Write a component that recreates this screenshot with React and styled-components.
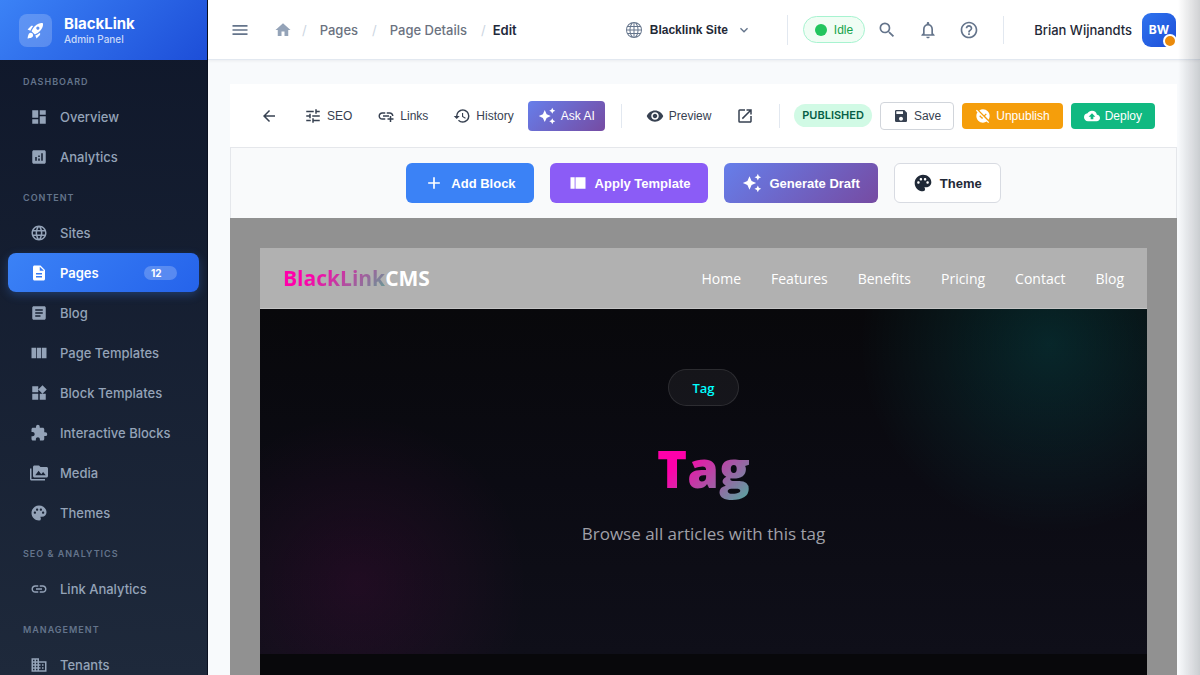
import React from 'react';
import styled, { createGlobalStyle, css } from 'styled-components';
import {
  MdRocketLaunch, MdDashboard, MdAnalytics, MdLanguage, MdDescription, MdArticle,
  MdWidgets, MdExtension, MdPermMedia, MdPalette, MdLink, MdBusiness,
  MdMenu, MdHome, MdExpandMore, MdSearch, MdNotificationsNone, MdHelpOutline,
  MdArrowBack, MdTune, MdAddLink, MdHistory, MdAutoAwesome, MdVisibility,
  MdOpenInNew, MdSave, MdUnpublished, MdBackup, MdAdd,
} from 'react-icons/md';
import { BsGlobe } from 'react-icons/bs';

const ui = `Inter, "Liberation Sans", sans-serif`;
const arial = `"Liberation Sans", Arial, sans-serif`;
const site = `"Open Sans", "Noto Sans", sans-serif`;

const GlobalStyle = createGlobalStyle`
  *, *::before, *::after { box-sizing: border-box; }
  body { margin: 0; font-family: ${ui}; background: #f8fafc; }
  button { font: inherit; color: inherit; background: none; border: 0; padding: 0; cursor: pointer; white-space: nowrap; }
  a { color: inherit; text-decoration: none; }
  h1, p, ul { margin: 0; padding: 0; }
  ul { list-style: none; }
  svg { display: block; flex-shrink: 0; }
`;

const Shell = styled.div`
  display: grid;
  grid-template-columns: 208px minmax(0, 1fr);
  height: 100vh;
  overflow: hidden;
`;

const Sidebar = styled.aside`
  background: linear-gradient(180deg, #0f172a 0%, #1e293b 100%);
  border-right: 1px solid #0a1020;
  overflow: hidden;
`;

const Brand = styled.div`
  display: flex;
  align-items: center;
  gap: 12px;
  height: 60px;
  padding: 0 19px;
  color: #fff;
  background: linear-gradient(135deg, #3b82f6 0%, #1d4ed8 100%);
`;

const BrandMark = styled.span`
  display: grid;
  place-items: center;
  width: 33px;
  height: 33px;
  border-radius: 8px;
  background: rgba(255, 255, 255, 0.2);
`;

const BrandName = styled.div`
  font-size: 15px;
  font-weight: 700;
  line-height: 17px;
`;

const BrandSub = styled.div`
  font-size: 10px;
  font-weight: 500;
  line-height: 14px;
  color: rgba(255, 255, 255, 0.75);
`;

const Section = styled.section`
  padding: 14px 8px 0;
`;

const SectionTitle = styled.div`
  padding: 0 15px;
  margin-bottom: 7px;
  font-size: 9px;
  font-weight: 600;
  line-height: 16px;
  letter-spacing: 1px;
  text-transform: uppercase;
  color: #64748b;
`;

const NavList = styled.ul`
  display: flex;
  flex-direction: column;
  gap: 1px;
`;

const NavItem = styled.a`
  display: flex;
  align-items: center;
  gap: 12px;
  height: 39px;
  padding: 0 22px;
  border-radius: 8px;
  font-size: 13px;
  font-weight: 500;
  color: #94a3b8;
  ${(p) => p.$active && css`
    color: #fff;
    font-weight: 600;
    background: linear-gradient(135deg, #3b82f6 0%, #2563eb 100%);
    box-shadow: 0 3px 10px rgba(59, 130, 246, 0.3);
  `}
`;

const Count = styled.span`
  width: 33px;
  height: 14px;
  margin-left: auto;
  padding-left: 7px;
  border-radius: 7px;
  background: rgba(255, 255, 255, 0.22);
  font-size: 10px;
  font-weight: 700;
  line-height: 14px;
`;

const Main = styled.div`
  display: flex;
  flex-direction: column;
  min-width: 0;
  min-height: 0;
`;

const TopBar = styled.header`
  display: flex;
  flex-shrink: 0;
  align-items: center;
  height: 60px;
  padding: 0 24px 0 22px;
  background: #fff;
  border-bottom: 1px solid #e2e8f0;
  box-shadow: 0 1px 3px rgba(15, 23, 42, 0.06);
  color: #64748b;
`;

const Crumbs = styled.nav`
  display: flex;
  align-items: center;
  margin-left: 24px;
  font-size: 13px;
  font-weight: 500;
  color: #6b7280;
`;

const HomeLink = styled.a`
  color: #94a3b8;
`;

const Slash = styled.span`
  margin: 0 ${(p) => (p.$last ? 7 : 13)}px 0 ${(p) => (p.$first ? 10 : 14)}px;
  font-weight: 400;
  color: #cbd5e1;
`;

const Current = styled.span`
  font-weight: 600;
  color: #1e293b;
`;

const SiteSwitch = styled.button`
  display: flex;
  align-items: center;
  gap: 8px;
  margin-left: auto;
  color: #64748b;
`;

const SiteName = styled.span`
  font-family: ${arial};
  font-size: 12px;
  font-weight: 700;
  color: #1f2937;
`;

const Divider = styled.span`
  width: 1px;
  height: ${(p) => p.$height}px;
  margin: 0 ${(p) => p.$right}px 0 ${(p) => p.$left}px;
  background: #e2e8f0;
`;

const Status = styled.span`
  display: flex;
  align-items: center;
  gap: 7px;
  height: 27px;
  padding: 0 11px;
  border: 1px solid #a7f3d0;
  border-radius: 14px;
  background: #f0fdf4;
  font-family: ${arial};
  font-size: 12px;
  color: #16a34a;
  &::before {
    content: '';
    width: 12px;
    height: 12px;
    border-radius: 50%;
    background: #22c55e;
  }
`;

const TopActions = styled.div`
  display: flex;
  gap: 21px;
  margin-left: 12px;
`;

const UserName = styled.span`
  font-size: 13px;
  font-weight: 500;
  color: #1f2937;
`;

const Avatar = styled.button`
  position: relative;
  width: 34px;
  height: 34px;
  margin-left: 10px;
  border-radius: 9px;
  background: linear-gradient(135deg, #2f74ee, #1d4ed8);
  font-size: 12px;
  font-weight: 700;
  color: #fff;
`;

const Presence = styled.span`
  position: absolute;
  right: -1px;
  bottom: -1px;
  width: 14px;
  height: 14px;
  border: 2px solid #fff;
  border-radius: 50%;
  background: #ea8a0b;
`;

const Content = styled.main`
  display: flex;
  flex: 1;
  flex-direction: column;
  min-height: 0;
  padding: 24px 23px 0 22px;
`;

const EditorBar = styled.div`
  display: flex;
  flex-shrink: 0;
  align-items: center;
  height: 63px;
  padding: 0 22px 0 30px;
  background: #fff;
  font-family: ${arial};
  font-size: 12px;
  color: #374151;
`;

const ToolGroup = styled.div`
  display: flex;
  align-items: center;
  gap: 25px;
`;

const BackButton = styled.button`
  margin-right: 26px;
`;

const ToolButton = styled.button`
  display: flex;
  align-items: center;
  gap: 5px;
`;

const AskButton = styled.button`
  display: flex;
  align-items: center;
  gap: 5px;
  height: 30px;
  margin-left: 14px;
  padding: 0 10px;
  border-radius: 4px;
  background: linear-gradient(135deg, #667eea 0%, #764ba2 100%);
  color: #fff;
`;

const Published = styled.span`
  height: 23px;
  padding: 0 8px;
  border-radius: 12px;
  background: #d1fae5;
  font-size: 11px;
  font-family: ${ui};
  font-weight: 600;
  line-height: 23px;
  color: #065f46;
`;

const SaveGroup = styled.div`
  display: flex;
  align-items: center;
  gap: 8px;
  margin-left: auto;
`;

const BarButton = styled.button`
  display: flex;
  align-items: center;
  gap: 5px;
  height: ${(p) => (p.$tone ? 26 : 28)}px;
  padding: 0 ${(p) => (p.$tone ? 13 : 12)}px;
  border: ${(p) => (p.$tone ? '0' : '1px solid #d1d5db')};
  border-radius: 4px;
  background: ${(p) => p.$tone || '#fff'};
  color: ${(p) => (p.$tone ? '#fff' : '#374151')};
`;

const BlockBar = styled.div`
  display: flex;
  flex-shrink: 0;
  justify-content: center;
  gap: 16px;
  padding: 15px 0;
  border: 1px solid #e5e7eb;
  border-bottom: 0;
  background: #f9fafb;
`;

const BlockButton = styled.button`
  display: flex;
  align-items: center;
  gap: 7px;
  height: 40px;
  padding: 0 18px;
  border: ${(p) => (p.$light ? '1px solid #d8dbe2' : '0')};
  border-radius: 6px;
  background: ${(p) => p.$bg};
  font-family: ${arial};
  font-size: 13px;
  font-weight: 700;
  color: ${(p) => (p.$light ? '#1f2937' : '#fff')};
`;

const Canvas = styled.div`
  flex: 1;
  min-height: 0;
  padding: 30px 30px 0;
  overflow: hidden;
  background: #919191;
  font-family: ${site};
`;

const SiteHeader = styled.header`
  display: flex;
  align-items: center;
  justify-content: space-between;
  height: 61px;
  padding: 0 23px;
  background: #b1b1b1;
  border-bottom: 1px solid #c5c5c5;
  color: #fff;
`;

const SiteLogo = styled.a`
  font-size: 21px;
  font-weight: 700;
`;

const LogoAccent = styled.span`
  background: linear-gradient(135deg, #ff00aa 30%, #6a9696 95%);
  background-clip: text;
  -webkit-background-clip: text;
  color: transparent;
`;

const SiteNav = styled.nav`
  display: flex;
  gap: 30px;
  font-size: 14px;
`;

const Hero = styled.section`
  display: flex;
  flex-direction: column;
  align-items: center;
  height: 345px;
  padding-top: 60px;
  background:
    radial-gradient(circle at 89% 35px, rgba(0, 255, 255, 0.12), transparent 190px),
    radial-gradient(circle at 11% 275px, rgba(255, 0, 170, 0.08), transparent 170px),
    linear-gradient(180deg, #08080b 0%, #0b0b13 50%, #0f0f19 100%);
`;

const Pill = styled.span`
  height: 37px;
  padding: 0 23px;
  border: 1px solid rgba(255, 255, 255, 0.1);
  border-radius: 19px;
  background: rgba(255, 255, 255, 0.05);
  font-size: 13px;
  font-weight: 600;
  line-height: 36px;
  color: #00ffff;
`;

const HeroTitle = styled.h1`
  margin-top: 30px;
  font-size: 51px;
  font-weight: 800;
  line-height: 64px;
  background: linear-gradient(135deg, #ff00aa 30%, #5f9ea0 95%);
  background-clip: text;
  -webkit-background-clip: text;
  color: transparent;
`;

const HeroText = styled.p`
  margin-top: 22px;
  font-size: 17px;
  line-height: 24px;
  color: #a0a0a8;
`;

const NextBlock = styled.section`
  height: 60px;
  background: #08080b;
`;

const EdgeShade = styled.div`
  position: fixed;
  inset: 0 0 0 auto;
  width: 22px;
  pointer-events: none;
  background: linear-gradient(90deg, transparent, rgba(60, 65, 75, 0.24));
`;

const ColumnsIcon = ({ size }) => (
  <svg width={size} height={size} viewBox="0 0 24 24" fill="currentColor" aria-hidden="true">
    <path d="M9 19h6V5H9v14zM2 19h6V5H2v14zM16 5v14h6V5h-6z" />
  </svg>
);

const LayoutIcon = ({ size }) => (
  <svg width={size} height={size} viewBox="0 0 24 24" fill="currentColor" aria-hidden="true">
    <path d="M3 5h5v14H3zM9 5h12v14H9z" />
  </svg>
);

const sections = [
  { title: 'Dashboard', items: [['Overview', MdDashboard], ['Analytics', MdAnalytics]] },
  {
    title: 'Content',
    items: [
      ['Sites', MdLanguage], ['Pages', MdDescription, 12], ['Blog', MdArticle],
      ['Page Templates', ColumnsIcon], ['Block Templates', MdWidgets],
      ['Interactive Blocks', MdExtension], ['Media', MdPermMedia], ['Themes', MdPalette],
    ],
  },
  { title: 'SEO & Analytics', items: [['Link Analytics', MdLink]] },
  { title: 'Management', items: [['Tenants', MdBusiness]] },
];

const siteLinks = ['Home', 'Features', 'Benefits', 'Pricing', 'Contact', 'Blog'];

export default function App() {
  return (
    <Shell>
      <GlobalStyle />
      <Sidebar>
        <Brand>
          <BrandMark><MdRocketLaunch size={19} /></BrandMark>
          <div>
            <BrandName>BlackLink</BrandName>
            <BrandSub>Admin Panel</BrandSub>
          </div>
        </Brand>
        <nav aria-label="Main">
          {sections.map(({ title, items }) => (
            <Section key={title}>
              <SectionTitle>{title}</SectionTitle>
              <NavList>
                {items.map(([label, Icon, count]) => (
                  <li key={label}>
                    <NavItem href="#" $active={Boolean(count)}>
                      <Icon size={18} />
                      {label}
                      {count && <Count>{count}</Count>}
                    </NavItem>
                  </li>
                ))}
              </NavList>
            </Section>
          ))}
        </nav>
      </Sidebar>
      <Main>
        <TopBar>
          <button aria-label="Menu"><MdMenu size={20} /></button>
          <Crumbs aria-label="Breadcrumb">
            <HomeLink href="#" aria-label="Home"><MdHome size={18} /></HomeLink>
            <Slash $first>/</Slash>
            <a href="#">Pages</a>
            <Slash>/</Slash>
            <a href="#">Page Details</a>
            <Slash $last>/</Slash>
            <Current>Edit</Current>
          </Crumbs>
          <SiteSwitch>
            <BsGlobe size={16} />
            <SiteName>Blacklink Site</SiteName>
            <MdExpandMore size={16} />
          </SiteSwitch>
          <Divider $height={30} $left={35} $right={15} />
          <Status>Idle</Status>
          <TopActions>
            <button aria-label="Search"><MdSearch size={20} /></button>
            <button aria-label="Notifications"><MdNotificationsNone size={20} /></button>
            <button aria-label="Help"><MdHelpOutline size={20} /></button>
          </TopActions>
          <Divider $height={28} $left={24} $right={30} />
          <UserName>Brian Wijnandts</UserName>
          <Avatar aria-label="Account">BW<Presence /></Avatar>
        </TopBar>
        <Content>
          <EditorBar>
            <BackButton aria-label="Back"><MdArrowBack size={18} /></BackButton>
            <ToolGroup>
              <ToolButton><MdTune size={18} />SEO</ToolButton>
              <ToolButton><MdAddLink size={18} />Links</ToolButton>
              <ToolButton><MdHistory size={18} />History</ToolButton>
            </ToolGroup>
            <AskButton><MdAutoAwesome size={18} />Ask AI</AskButton>
            <Divider $height={24} $left={16} $right={24} />
            <ToolGroup>
              <ToolButton><MdVisibility size={18} />Preview</ToolButton>
              <ToolButton aria-label="Open in new tab"><MdOpenInNew size={18} /></ToolButton>
            </ToolGroup>
            <Divider $height={24} $left={25} $right={0} />
            <SaveGroup>
              <Published>PUBLISHED</Published>
              <BarButton><MdSave size={16} />Save</BarButton>
              <BarButton $tone="#f59e0b"><MdUnpublished size={16} />Unpublish</BarButton>
              <BarButton $tone="#10b981"><MdBackup size={16} />Deploy</BarButton>
            </SaveGroup>
          </EditorBar>
          <BlockBar>
            <BlockButton $bg="#3b82f6"><MdAdd size={20} />Add Block</BlockButton>
            <BlockButton $bg="#8b5cf6"><LayoutIcon size={20} />Apply Template</BlockButton>
            <BlockButton $bg="linear-gradient(135deg, #667eea 0%, #764ba2 100%)">
              <MdAutoAwesome size={20} />Generate Draft
            </BlockButton>
            <BlockButton $light $bg="#fff"><MdPalette size={20} />Theme</BlockButton>
          </BlockBar>
          <Canvas>
            <SiteHeader>
              <SiteLogo href="#"><LogoAccent>BlackLink</LogoAccent>CMS</SiteLogo>
              <SiteNav aria-label="Site">
                {siteLinks.map((label) => <a key={label} href="#">{label}</a>)}
              </SiteNav>
            </SiteHeader>
            <Hero>
              <Pill>Tag</Pill>
              <HeroTitle>Tag</HeroTitle>
              <HeroText>Browse all articles with this tag</HeroText>
            </Hero>
            <NextBlock />
          </Canvas>
        </Content>
      </Main>
      <EdgeShade />
    </Shell>
  );
}
